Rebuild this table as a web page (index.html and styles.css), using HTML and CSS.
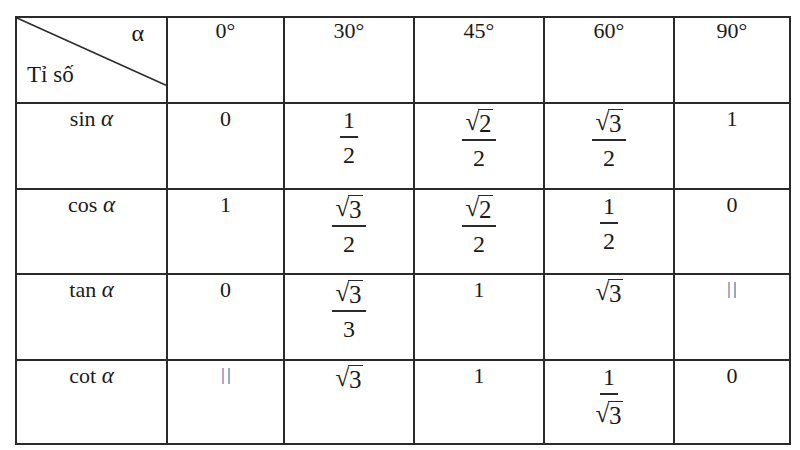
FILE: index.html
```html
<!DOCTYPE html>
<html lang="vi">
<head>
<meta charset="utf-8">
<title>Bảng giá trị lượng giác</title>
<link rel="stylesheet" href="styles.css">
</head>
<body>
<table class="trig">
  <colgroup>
    <col class="c0"><col class="c1"><col class="c2"><col class="c3"><col class="c4"><col class="c5">
  </colgroup>
  <tr class="head">
    <td class="corner">
      <svg class="diag" viewBox="0 0 100 100" preserveAspectRatio="none"><line x1="0" y1="0" x2="100" y2="80" vector-effect="non-scaling-stroke"/></svg>
      <div class="corner-in">
        <span class="alpha-up">α</span>
        <span class="ratio">Tỉ số</span>
      </div>
    </td>
    <td>0°</td><td>30°</td><td>45°</td><td>60°</td><td>90°</td>
  </tr>
  <tr class="r-sin">
    <td>sin <i class="a">α</i></td>
    <td>0</td>
    <td><span class="frac"><span class="num">1</span><span class="den">2</span></span></td>
    <td><span class="frac"><span class="num"><span class="rt">√</span><span class="rad">2</span></span><span class="den">2</span></span></td>
    <td><span class="frac"><span class="num"><span class="rt">√</span><span class="rad">3</span></span><span class="den">2</span></span></td>
    <td>1</td>
  </tr>
  <tr class="r-cos">
    <td>cos <i class="a">α</i></td>
    <td>1</td>
    <td><span class="frac"><span class="num"><span class="rt">√</span><span class="rad">3</span></span><span class="den">2</span></span></td>
    <td><span class="frac"><span class="num"><span class="rt">√</span><span class="rad">2</span></span><span class="den">2</span></span></td>
    <td><span class="frac"><span class="num">1</span><span class="den">2</span></span></td>
    <td>0</td>
  </tr>
  <tr class="r-tan">
    <td>tan <i class="a">α</i></td>
    <td>0</td>
    <td><span class="frac"><span class="num"><span class="rt">√</span><span class="rad">3</span></span><span class="den">3</span></span></td>
    <td>1</td>
    <td><span class="sq"><span class="rt">√</span><span class="rad">3</span></span></td>
    <td><span class="undef" aria-label="không xác định"></span></td>
  </tr>
  <tr class="r-cot">
    <td>cot <i class="a">α</i></td>
    <td><span class="undef" aria-label="không xác định"></span></td>
    <td><span class="sq"><span class="rt">√</span><span class="rad">3</span></span></td>
    <td>1</td>
    <td><span class="frac"><span class="num">1</span><span class="den"><span class="rt">√</span><span class="rad">3</span></span></span></td>
    <td>0</td>
  </tr>
</table>
</body>
</html>
```

FILE: styles.css
```css
html, body {
  margin: 0;
  padding: 0;
  background: #fff;
}
body {
  padding: 16px 0 0 15px;
  font-family: "Liberation Serif", "Times New Roman", serif;
  color: #1a1a1a;
}
.trig {
  border-collapse: collapse;
  table-layout: fixed;
  width: 774px;
}
.c0 { width: 151px; }
.c1 { width: 117px; }
.c2 { width: 130px; }
.c3 { width: 130px; }
.c4 { width: 130px; }
.c5 { width: 116px; }
.trig td {
  border: 2px solid #2a2a2a;
  height: 81px;
  padding: 2px 0 0 0;
  vertical-align: top;
  text-align: center;
  font-size: 22px;
  line-height: 26px;
}
.trig .head td {
  padding-top: 0;
  height: 84px;
}
.trig .r-sin td { height: 82px; }
.trig .r-cos td { height: 81px; }
.trig .r-tan td { height: 82px; }
.trig .r-cot td { height: 80px; }
.trig .head td.corner {
  position: relative;
  padding: 0;
}
.diag {
  position: absolute;
  left: 0;
  top: 0;
  width: 100%;
  height: 100%;
  overflow: visible;
}
.diag line {
  stroke: #2a2a2a;
  stroke-width: 1.5;
}
.corner-in {
  display: flex;
  flex-direction: column;
  height: 84px;
}
.alpha-up {
  align-self: flex-end;
  margin: 2px 22px 0 0;
  font-size: 24px;
}
.ratio {
  align-self: flex-start;
  margin: auto 0 14px 10px;
  font-size: 23px;
}
.a {
  font-style: italic;
  font-size: 23px;
}
.frac {
  display: inline-flex;
  flex-direction: column;
  align-items: center;
  vertical-align: top;
  margin-top: 1px;
  font-size: 24px;
}
.frac .num {
  padding: 0 3px 2px;
  border-bottom: 2px solid #2a2a2a;
  line-height: 27px;
}
.frac .den {
  padding: 4px 3px 0;
  line-height: 27px;
}
.sq, .num, .den {
  display: inline-flex;
  align-items: flex-end;
  justify-content: center;
}
.rt {
  font-size: 25px;
  line-height: 30px;
}
.rad {
  border-top: 1.5px solid #2a2a2a;
  line-height: 27px;
  padding: 0 1px;
  margin-left: -1px;
  font-size: 25px;
}
.sq .rad {
  font-size: 25px;
}
.undef {
  display: inline-block;
  width: 4px;
  height: 16px;
  margin-top: 5px;
  border-left: 2px solid #c4a4b4;
  border-right: 2px solid #9aa6c4;
}
```
